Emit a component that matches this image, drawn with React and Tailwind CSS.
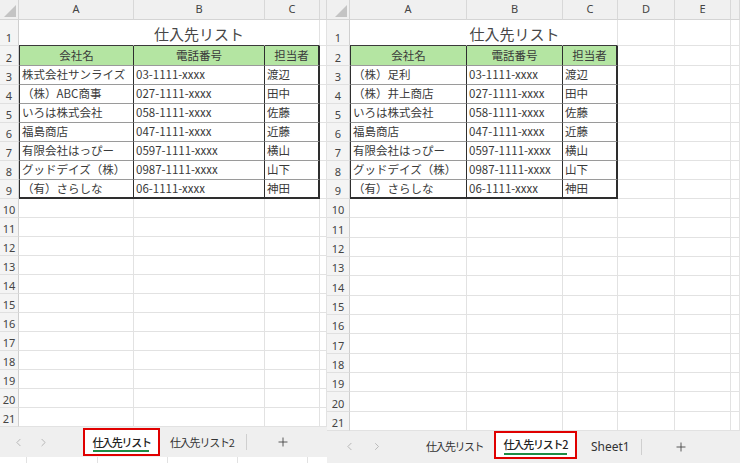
import { ChevronLeft, ChevronRight, Plus } from "lucide-react";

const JP = "font-['Noto_Sans_CJK_JP','Noto_Sans',sans-serif]";

const leftData = [
  ["株式会社サンライズ", "03-1111-xxxx", "渡辺"],
  ["（株）ABC商事", "027-1111-xxxx", "田中"],
  ["いろは株式会社", "058-1111-xxxx", "佐藤"],
  ["福島商店", "047-1111-xxxx", "近藤"],
  ["有限会社はっぴー", "0597-1111-xxxx", "横山"],
  ["グッドデイズ（株）", "0987-1111-xxxx", "山下"],
  ["（有）さらしな", "06-1111-xxxx", "神田"],
];

const rightData = [
  ["（株）足利", "03-1111-xxxx", "渡辺"],
  ["（株）井上商店", "027-1111-xxxx", "田中"],
  ["いろは株式会社", "058-1111-xxxx", "佐藤"],
  ["福島商店", "047-1111-xxxx", "近藤"],
  ["有限会社はっぴー", "0597-1111-xxxx", "横山"],
  ["グッドデイズ（株）", "0987-1111-xxxx", "山下"],
  ["（有）さらしな", "06-1111-xxxx", "神田"],
];

const headers = ["会社名", "電話番号", "担当者"];

function cellBorder(r, c) {
  if (c < 3 && r === 1) {
    const right = c === 2 ? "border-r border-r-[#e2e2e2]" : "border-r border-r-transparent";
    return right + " border-b border-b-[#3a3a3a]";
  }
  if (c < 3 && r >= 2 && r <= 9) {
    const right = c === 2 ? "border-r-2 border-r-[#2e2e2e]" : "border-r border-r-[#2e2e2e]";
    const bottom = r === 9 ? "border-b-2 border-b-[#2e2e2e]" : "border-b border-b-[#9a9a9a]";
    const left = c === 0 ? " border-l border-l-[#2e2e2e]" : "";
    return right + " " + bottom + left;
  }
  return "border-r border-r-[#e2e2e2] border-b border-b-[#e2e2e2]";
}

function Corner({ w }) {
  return (
    <div className={`${w} shrink-0 h-full relative bg-[#f0f0f0] border-r border-r-[#d4d4d4] border-b border-b-[#d4d4d4]`}>
      <svg className="absolute right-[2px] bottom-[2px]" width="12" height="12" viewBox="0 0 12 12">
        <polygon points="12,0 12,12 0,12" fill="#c4c4c4" />
      </svg>
    </div>
  );
}

function Sheet({ rowHdrW, cols, data, extraH }) {
  const rows = [];
  for (let r = 1; r <= 21; r++) rows.push(r);
  const rowH = (r) => (r === 1 ? "h-[26px]" : r === 2 ? "h-[20px]" : r <= 9 ? "h-[19px]" : extraH);
  return (
    <div className="flex flex-col shrink-0">
      <div className="flex h-[20px]">
        <Corner w={rowHdrW} />
        {cols.map((col, i) => (
          <div
            key={i}
            className={`${col.w} shrink-0 h-full bg-[#f0f0f0] border-r border-r-[#d8d8d8] border-b border-b-[#d4d4d4] flex items-center justify-center text-[11px] text-[#444] font-['Noto_Sans',sans-serif]`}
          >
            {col.k}
          </div>
        ))}
      </div>
      {rows.map((r) => (
        <div key={r} className={`flex ${rowH(r)}`}>
          <div
            className={`${rowHdrW} shrink-0 h-full bg-[#f4f4f4] border-r border-r-[#cfcfcf] border-b border-b-[#e0e0e0] flex items-end justify-center pb-[2px] text-[11px] leading-none text-[#444] font-['Noto_Sans',sans-serif]`}
          >
            {r}
          </div>
          {cols.map((col, c) => {
            let content = null;
            let extra = "bg-white";
            if (r === 1 && c === 1) {
              content = (
                <span className={`text-[15px] text-[#474747] leading-none whitespace-nowrap ${JP}`}>仕入先リスト</span>
              );
              extra = "bg-white justify-center items-center pt-[2px]";
            } else if (r === 2 && c < 3) {
              content = (
                <span className={`text-[11.5px] text-[#3a3a3a] leading-none whitespace-nowrap ${JP}`}>{headers[c]}</span>
              );
              extra = "bg-[#b4e5a2] justify-center items-center";
            } else if (r >= 3 && r <= 9 && c < 3) {
              content = (
                <span className={`text-[11.5px] text-[#3a3a3a] leading-none whitespace-nowrap ${JP}`}>{data[r - 3][c]}</span>
              );
              extra = "bg-white items-center pl-[2px]";
            }
            return (
              <div key={c} className={`${col.w} shrink-0 h-full flex overflow-visible ${cellBorder(r, c)} ${extra}`}>
                {content}
              </div>
            );
          })}
        </div>
      ))}
    </div>
  );
}

function TabBarLeft() {
  return (
    <div className={`h-[30px] bg-[#efefef] flex items-start ${JP}`}>
      <div className="w-[36px] h-full flex items-center justify-center text-[#aaaaaa]">
        <ChevronLeft size={13} strokeWidth={1.5} />
      </div>
      <div className="w-[14px] h-full flex items-center justify-center text-[#aaaaaa]">
        <ChevronRight size={13} strokeWidth={1.5} />
      </div>
      <div className="ml-[33px] mt-[1px] w-[77px] h-[28px] border-2 border-[#e00000] bg-white flex flex-col items-center justify-center relative">
        <span className="text-[11px] font-medium text-[#222] tracking-[-1.3px] leading-none">仕入先リスト</span>
        <div className="absolute bottom-[2px] left-[8px] w-[56px] h-[2px] bg-[#1e8c45]" />
      </div>
      <div className="ml-[10px] h-full flex items-center">
        <span className="text-[11px] text-[#333] tracking-[-1.2px] leading-none">仕入先リスト2</span>
      </div>
      <div className="ml-[12px] mt-[7px] w-px h-[16px] bg-[#cfcfcf]" />
      <div className="ml-[29px] h-full flex items-center text-[#444]">
        <Plus size={14} strokeWidth={1.5} />
      </div>
    </div>
  );
}

function TabBarRight() {
  return (
    <div className={`h-[32px] bg-[#efefef] flex items-start ${JP}`}>
      <div className="w-[44px] h-full flex items-center justify-center text-[#aaaaaa]">
        <ChevronLeft size={13} strokeWidth={1.5} />
      </div>
      <div className="w-[12px] h-full flex items-center justify-center text-[#aaaaaa]">
        <ChevronRight size={13} strokeWidth={1.5} />
      </div>
      <div className="ml-[43px] h-full flex items-center">
        <span className="text-[11px] text-[#333] tracking-[-1.5px] leading-none">仕入先リスト</span>
      </div>
      <div className="ml-[11px] w-[83px] h-[28px] border-2 border-[#e00000] bg-white flex flex-col items-center justify-center relative">
        <span className="text-[11px] font-medium text-[#222] tracking-[-1.2px] leading-none">仕入先リスト2</span>
        <div className="absolute bottom-[2px] left-[8px] w-[63px] h-[2px] bg-[#1e8c45]" />
      </div>
      <div className="ml-[14px] h-full flex items-center">
        <span className="text-[12px] text-[#333] leading-none font-['Noto_Sans',sans-serif]">Sheet1</span>
      </div>
      <div className="ml-[11px] mt-[8px] w-px h-[16px] bg-[#cfcfcf]" />
      <div className="ml-[32px] h-full flex items-center text-[#444]">
        <Plus size={14} strokeWidth={1.5} />
      </div>
    </div>
  );
}

export default function App() {
  const leftCols = [
    { k: "A", w: "w-[115px]" },
    { k: "B", w: "w-[131px]" },
    { k: "C", w: "w-[55px]" },
    { k: "", w: "w-[7px]" },
  ];
  const rightCols = [
    { k: "A", w: "w-[117px]" },
    { k: "B", w: "w-[96px]" },
    { k: "C", w: "w-[55px]" },
    { k: "D", w: "w-[57px]" },
    { k: "E", w: "w-[56px]" },
    { k: "", w: "w-[9px]" },
  ];
  return (
    <div className="w-[740px] h-[463px] overflow-hidden bg-white flex">
      <div className="w-[327px] shrink-0 flex flex-col overflow-hidden">
        <Sheet rowHdrW="w-[19px]" cols={leftCols} data={leftData} extraH="h-[19px]" />
        <TabBarLeft />
        <div className="h-[6px] flex bg-white">
          <div className="w-[27px] border-r border-r-[#e2e2e2]" />
          <div className="w-[71px] border-r border-r-[#e2e2e2]" />
          <div className="w-[70px] border-r border-r-[#e2e2e2]" />
          <div className="w-[70px] border-r border-r-[#e2e2e2]" />
          <div className="w-[70px] border-r border-r-[#e2e2e2]" />
        </div>
      </div>
      <div className="w-[413px] shrink-0 flex flex-col overflow-hidden">
        <Sheet rowHdrW="w-[23px]" cols={rightCols} data={rightData} extraH="h-[19.33px]" />
        <TabBarRight />
      </div>
    </div>
  );
}
